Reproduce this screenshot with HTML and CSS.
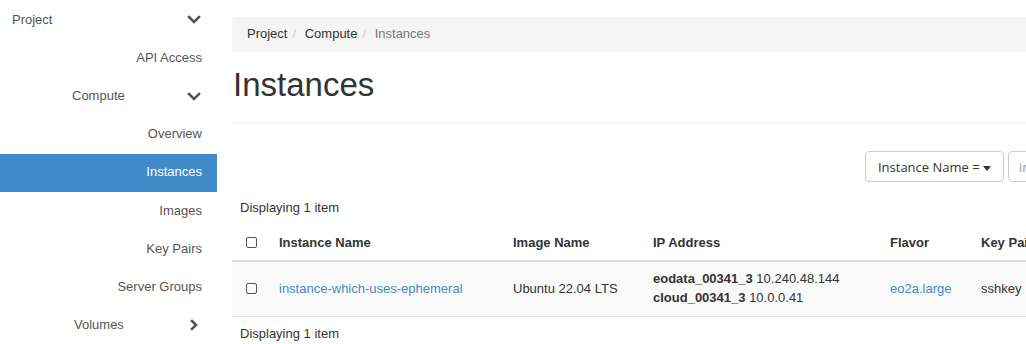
FILE: index.html
```html
<!DOCTYPE html>
<html lang="en">
<head>
    <meta charset="UTF-8">
    <title>Instances</title>
    <link rel="stylesheet" href="styles.css">
</head>
<body>
    <div class="layout">
        <nav class="sidebar">
            <div class="nav-head">
                <span class="nav-label">Project</span>
                <svg class="chev" width="14" height="10" viewBox="0 0 14 10"><polyline points="2,2 7,7 12,2" /></svg>
            </div>
            <a class="nav-item">API Access</a>
            <div class="nav-head sub">
                <span class="nav-label">Compute</span>
                <svg class="chev" width="14" height="10" viewBox="0 0 14 10"><polyline points="2,2 7,7 12,2" /></svg>
            </div>
            <a class="nav-item">Overview</a>
            <a class="nav-item active">Instances</a>
            <a class="nav-item">Images</a>
            <a class="nav-item">Key Pairs</a>
            <a class="nav-item">Server Groups</a>
            <div class="nav-head sub vol">
                <span class="nav-label">Volumes</span>
                <svg class="chev" width="14" height="12" viewBox="0 0 14 12"><polyline points="5,2 9,6 5,10" /></svg>
            </div>
        </nav>

        <main class="content">
            <ol class="breadcrumb">
                <li><a>Project</a></li>
                <li><a>Compute</a></li>
                <li class="current">Instances</li>
            </ol>

            <div class="page-header">
                <h1>Instances</h1>
            </div>

            <div class="toolbar">
                <button class="btn-select">Instance Name = <span class="caret"></span></button>
                <input class="filter-input" type="text" placeholder="instance name">
            </div>

            <table class="table">
                <colgroup>
                    <col style="width: 39px">
                    <col style="width: 234px">
                    <col style="width: 140px">
                    <col style="width: 237px">
                    <col style="width: 91px">
                    <col>
                </colgroup>
                <thead>
                    <tr class="caption">
                        <td colspan="6">Displaying 1 item</td>
                    </tr>
                    <tr class="head">
                        <th><span class="check"></span></th>
                        <th>Instance Name</th>
                        <th>Image Name</th>
                        <th>IP Address</th>
                        <th>Flavor</th>
                        <th>Key Pair</th>
                    </tr>
                </thead>
                <tbody>
                    <tr class="row">
                        <td><span class="check"></span></td>
                        <td><a class="link">instance-which-uses-ephemeral</a></td>
                        <td>Ubuntu 22.04 LTS</td>
                        <td>
                            <div><b>eodata_00341_3</b> 10.240.48.144</div>
                            <div><b>cloud_00341_3</b> 10.0.0.41</div>
                        </td>
                        <td><a class="link">eo2a.large</a></td>
                        <td>sshkey</td>
                    </tr>
                </tbody>
                <tfoot>
                    <tr class="caption">
                        <td colspan="6">Displaying 1 item</td>
                    </tr>
                </tfoot>
            </table>
        </main>
    </div>
</body>
</html>
```

FILE: styles.css
```css
body {
    margin: 0;
    font-family: "Liberation Sans", Arial, sans-serif;
    font-size: 13px;
    line-height: 1.42857;
    color: #333;
    background: #fff;
    overflow: hidden;
}
.layout {
    display: flex;
    width: 1203px;
}
.sidebar {
    flex: 0 0 217px;
    margin-top: 1.3px;
}
.nav-head, .nav-item {
    display: flex;
    align-items: center;
    height: 38.1px;
    color: #555;
}
.nav-head {
    justify-content: space-between;
    padding: 0 15px 0 12px;
}
.nav-head.sub {
    padding-left: 72px;
}
.nav-head.vol {
    padding-left: 74px;
}
.chev {
    fill: none;
    stroke: #555;
    stroke-width: 2.6;
    stroke-linecap: square;
    margin-right: 1px;
}
.nav-item {
    justify-content: flex-end;
    padding-right: 15px;
}
.nav-item.active {
    background: #428bca;
    color: #fff;
}
.content {
    flex: 0 0 956px;
    padding: 0 15px;
}
.breadcrumb {
    list-style: none;
    margin: 17px 0 0;
    padding: 8px 15px;
    background: #f5f5f5;
    border-radius: 4px;
    display: flex;
}
.breadcrumb li + li::before {
    content: "/\00a0";
    padding: 0 5px;
    color: #ccc;
}
.breadcrumb a {
    color: #333;
}
.breadcrumb .current {
    color: #777;
}
.page-header {
    margin-top: 15.5px;
    padding-bottom: 10px;
    border-bottom: 1px solid #eee;
}
.page-header h1 {
    margin: 0 0 10px;
    font-size: 33px;
    font-weight: 400;
    line-height: 36.3px;
    padding-left: 1px;
}
.toolbar {
    display: flex;
    justify-content: flex-end;
    gap: 4px;
    margin-top: 27px;
    margin-bottom: 9px;
}
.btn-select {
    height: 31px;
    padding: 0 11px;
    white-space: nowrap;
    font-family: "Open Sans", sans-serif;
    font-size: 13px;
    color: #333;
    background: #fff;
    border: 1px solid #ccc;
    border-radius: 4px;
    width: 139px;
}
.caret {
    display: inline-block;
    width: 0;
    height: 0;
    border-top: 5px solid #333;
    border-left: 4.5px solid transparent;
    border-right: 4.5px solid transparent;
    vertical-align: middle;
}
.filter-input {
    width: 180px;
    height: 31px;
    box-sizing: border-box;
    padding: 0 10px;
    font-family: "Open Sans", sans-serif;
    font-size: 13px;
    border: 1px solid #ccc;
    border-radius: 4px;
}
.filter-input::placeholder {
    color: #999;
}
.table {
    width: 100%;
    table-layout: fixed;
    border-collapse: collapse;
}
.table td, .table th {
    padding: 8px;
    text-align: left;
    white-space: nowrap;
    overflow: hidden;
}
.head th {
    font-weight: 700;
    border-bottom: 2px solid #ddd;
    vertical-align: middle;
}
.row td {
    background: #f9f9f9;
    border-bottom: 1px solid #ddd;
    vertical-align: middle;
}
.check {
    display: inline-block;
    width: 9px;
    height: 9px;
    border: 1px solid #555;
    border-radius: 2px;
    margin-left: 6px;
    vertical-align: middle;
    position: relative;
    top: -1px;
}
.link {
    color: #428bca;
}
```
